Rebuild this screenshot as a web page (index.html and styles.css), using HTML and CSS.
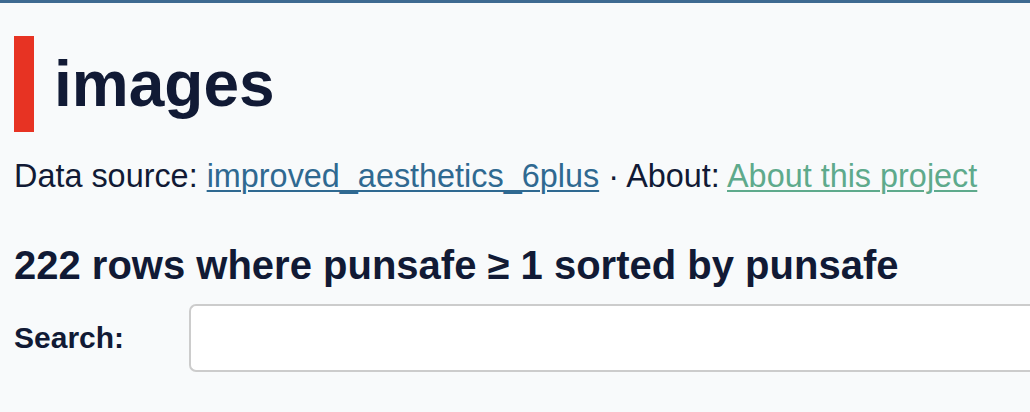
FILE: index.html
```html
<!DOCTYPE html>
<html lang="en">
<head>
<meta charset="utf-8">
<title>images</title>
<link rel="stylesheet" href="styles.css">
</head>
<body>
<div class="topbar"></div>
<main class="content">
  <h1 class="title">images</h1>
  <p class="meta">Data source: <a class="link" href="#">improved_aesthetics_6plus</a> · About: <a class="link visited" href="#">About this project</a></p>
  <h3 class="count">222 rows where punsafe ≥ 1 sorted by punsafe</h3>
  <form class="search-row">
    <label class="search-label" for="_search">Search:</label>
    <input class="search-input" id="_search" type="search" name="_search">
  </form>
</main>
</body>
</html>
```

FILE: styles.css
```css
html {
  overflow: hidden;
}
body {
  margin: 0;
  background: #f8fafb;
  color: #111a35;
  font-family: "Liberation Sans", Arial, Helvetica, sans-serif;
}
.topbar {
  height: 3px;
  background: #3e6a91;
}
.content {
  padding: 0 14px;
}
.title {
  margin: 33px 0 0 0;
  font-size: 64px;
  line-height: 96px;
  font-weight: bold;
  border-left: 20px solid #e73323;
  padding-left: 20px;
}
.meta {
  margin: 20px 0 0 0;
  font-size: 32.4px;
  line-height: 48px;
}
.link {
  color: #2f6991;
  text-decoration: underline;
  text-underline-offset: 3px;
  text-decoration-thickness: 2px;
}
.link.visited {
  color: #5eaa8c;
}
.count {
  margin: 35px 0 0 0;
  font-size: 40px;
  line-height: 60px;
  font-weight: bold;
}
.search-row {
  display: flex;
  align-items: center;
  margin: 9px -14px 0 0;
}
.search-label {
  width: 175px;
  flex: none;
  font-size: 30px;
  font-weight: bold;
}
.search-input {
  flex: 1;
  min-width: 0;
  height: 68px;
  box-sizing: border-box;
  border: 2px solid #cccccc;
  border-right: none;
  border-radius: 7px 0 0 7px;
  background: #ffffff;
  padding: 8px;
  font-size: 28px;
  font-family: inherit;
}
```
